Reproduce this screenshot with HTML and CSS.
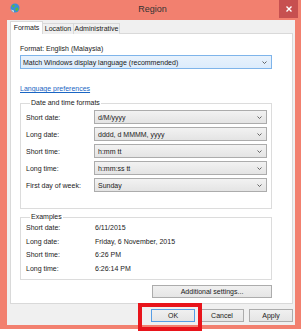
FILE: index.html
```html
<!DOCTYPE html>
<html>
<head>
    <title>Region</title>
    <link rel="stylesheet" href="styles.css">
</head>
<body>
<div class="window">
    <div class="titlebar">
        <svg class="app-icon" width="10" height="10" viewBox="0 0 10 10">
            <circle cx="5" cy="5" r="4.5" fill="#3b8fd9"/>
            <path d="M2 2.5 L4 1.5 L5 3 L3.5 4.5 L2.5 4 Z M5.5 5 L8 4.5 L8.5 6.5 L6.5 8.5 L5.5 7 Z" fill="#5cb83c"/>
            <path d="M1 6.5 A4.5 4.5 0 0 0 4 9.4 L4 7.5 Z" fill="#d8d8d8"/>
        </svg>
        <span class="title">Region</span>
        <span class="close">
            <svg width="6" height="6" viewBox="0 0 6 6"><path d="M0.5 0.5 L5.5 5.5 M5.5 0.5 L0.5 5.5" stroke="#fff" stroke-width="1.4"/></svg>
        </span>
    </div>

    <div class="client">
        <div class="tabs">
            <span class="tab tab-formats active">Formats</span>
            <span class="tab tab-location">Location</span>
            <span class="tab tab-admin">Administrative</span>
        </div>

        <div class="panel">
            <p class="format-label">Format: English (Malaysia)</p>
            <div class="select select-blue">
                <span>Match Windows display language (recommended)</span>
                <svg class="chevron" width="5" height="3" viewBox="0 0 5 3"><polyline points="0.5,0.5 2.5,2.5 4.5,0.5" fill="none" stroke="#555" stroke-width="0.9"/></svg>
            </div>
            <a class="link" href="#">Language preferences</a>

            <fieldset class="group formats">
                <legend>Date and time formats</legend>
                <div class="row">
                    <label>Short date:</label>
                    <div class="select"><span>d/M/yyyy</span><svg class="chevron" width="5" height="3" viewBox="0 0 5 3"><polyline points="0.5,0.5 2.5,2.5 4.5,0.5" fill="none" stroke="#555" stroke-width="0.9"/></svg></div>
                </div>
                <div class="row">
                    <label>Long date:</label>
                    <div class="select"><span>dddd, d MMMM, yyyy</span><svg class="chevron" width="5" height="3" viewBox="0 0 5 3"><polyline points="0.5,0.5 2.5,2.5 4.5,0.5" fill="none" stroke="#555" stroke-width="0.9"/></svg></div>
                </div>
                <div class="row">
                    <label>Short time:</label>
                    <div class="select"><span>h:mm tt</span><svg class="chevron" width="5" height="3" viewBox="0 0 5 3"><polyline points="0.5,0.5 2.5,2.5 4.5,0.5" fill="none" stroke="#555" stroke-width="0.9"/></svg></div>
                </div>
                <div class="row">
                    <label>Long time:</label>
                    <div class="select"><span>h:mm:ss tt</span><svg class="chevron" width="5" height="3" viewBox="0 0 5 3"><polyline points="0.5,0.5 2.5,2.5 4.5,0.5" fill="none" stroke="#555" stroke-width="0.9"/></svg></div>
                </div>
                <div class="row">
                    <label>First day of week:</label>
                    <div class="select"><span>Sunday</span><svg class="chevron" width="5" height="3" viewBox="0 0 5 3"><polyline points="0.5,0.5 2.5,2.5 4.5,0.5" fill="none" stroke="#555" stroke-width="0.9"/></svg></div>
                </div>
            </fieldset>

            <fieldset class="group examples">
                <legend>Examples</legend>
                <div class="ex-row"><span class="ex-label">Short date:</span><span>6/11/2015</span></div>
                <div class="ex-row"><span class="ex-label">Long date:</span><span>Friday, 6 November, 2015</span></div>
                <div class="ex-row"><span class="ex-label">Short time:</span><span>6:26 PM</span></div>
                <div class="ex-row"><span class="ex-label">Long time:</span><span>6:26:14 PM</span></div>
            </fieldset>

            <button class="btn btn-settings">Additional settings...</button>
        </div>

        <div class="actions">
            <button class="btn btn-default">OK</button>
            <button class="btn">Cancel</button>
            <button class="btn">Apply</button>
        </div>
    </div>
</div>
<div class="highlight"></div>
</body>
</html>
```

FILE: styles.css
```css
* { margin: 0; padding: 0; box-sizing: border-box; }
body {
    position: relative; width: 301px; height: 331px; background: #fff;
    font-family: "Liberation Sans", Arial, sans-serif; font-size: 7px; color: #1a1a1a;
}

/* window frame */
.window {
    width: 301px; height: 329px; background: #f2806f;
    padding: 0 6px 4px 7px; display: flex; flex-direction: column;
}
.titlebar {
    height: 20px; margin-right: -3px;
    display: grid; grid-template-columns: 1fr auto 1fr; align-items: start;
}
.app-icon { margin: 3px 0 0 3px; }
.title { font-size: 9px; line-height: 18px; color: #333; }
.close {
    justify-self: end; width: 19px; height: 18px; background: #c75050;
    display: flex; align-items: center; justify-content: center;
}

.client { flex: 1; background: #f0f0f0; padding: 1px 2px 0 3px; }

/* tabs */
.tabs { display: flex; align-items: flex-end; height: 13px; }
.tab {
    height: 11px; line-height: 10px; text-align: center;
    border: 1px solid #d9d9d9; border-bottom: none; background: #f0f0f0;
}
.tab + .tab { margin-left: -1px; }
.tab-formats { width: 33px; }
.tab-location { width: 32px; }
.tab-admin { width: 47px; }
.tab.active { height: 13px; line-height: 11px; background: #fff; position: relative; z-index: 1; }

.panel {
    height: 271px; margin-top: -1px; background: #fff; border: 1px solid #d9d9d9;
    padding: 0 20px 0 9px; display: flex; flex-direction: column;
}
.format-label { margin-top: 10px; line-height: 9px; }

/* drop downs */
.select {
    height: 14px; display: flex; align-items: center; justify-content: space-between;
    padding: 0 4px 0 3px; border: 1px solid #acacac;
    background: linear-gradient(#f2f2f2, #e4e4e4);
}
.select-blue {
    margin-top: 2px; padding-left: 2px; border-color: #7eb4ea;
    background: linear-gradient(#e8f2fc, #dcecfc);
}
.chevron { flex: none; }

.link {
    margin-top: 15px; align-self: flex-start; line-height: 9px;
    color: #1a66c4; text-decoration: underline;
}

/* group boxes */
.group { border: 1px solid #dcdcdc; padding: 3px 4px 16px 5px; }
.group legend { margin-left: 4px; padding: 0 1px; line-height: 8px; }
.formats { margin-top: 6px; display: flex; flex-direction: column; gap: 3px; }
.row { display: flex; align-items: center; }
.row label { width: 68px; }
.row .select { flex: 1; }

.examples { margin-top: 4px; padding: 0 4px 4px 5px; }
.ex-row { display: flex; line-height: 13.5px; }
.ex-label { width: 69px; }

/* buttons */
.btn {
    height: 13px; font-family: inherit; font-size: 7px; color: #1a1a1a;
    border: 1px solid #acacac; background: linear-gradient(#f0f0f0, #e5e5e5);
}
.btn-settings { width: 120px; margin-top: 5px; align-self: flex-end; }
.actions { margin-top: 5px; display: flex; justify-content: flex-end; gap: 5px; }
.actions .btn { width: 44px; }
.btn-default { border-color: #569de5; }

/* annotation box */
.highlight {
    position: absolute; left: 138px; top: 303px; width: 64px; height: 28px;
    border: 4px solid #e8141b;
}
```
